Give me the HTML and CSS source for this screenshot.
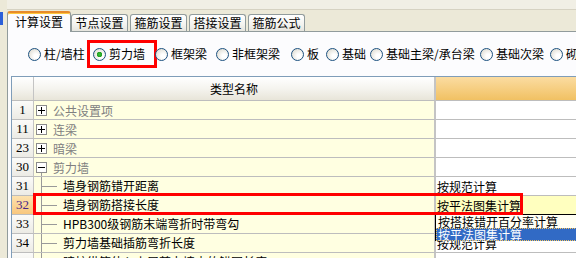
FILE: index.html
```html
<!DOCTYPE html>
<html lang="zh-CN">
<head>
  <meta charset="UTF-8">
  <link rel="stylesheet" href="styles.css">
</head>
<body>
  <div class="app">
    <div class="side"><div class="side-mark"></div></div>
    <div class="main">
      <div class="topbar"></div>
      <div class="tabs">
        <div class="tab active">计算设置</div>
        <div class="tab">节点设置</div>
        <div class="tab">箍筋设置</div>
        <div class="tab">搭接设置</div>
        <div class="tab">箍筋公式</div>
      </div>
      <div class="panel">
        <div class="radios">
          <label class="radio"><span class="dot"></span>柱/墙柱</label>
          <label class="radio checked"><span class="dot"></span>剪力墙<span class="mark"></span></label>
          <label class="radio"><span class="dot"></span>框架梁</label>
          <label class="radio"><span class="dot"></span>非框架梁</label>
          <label class="radio"><span class="dot"></span>板</label>
          <label class="radio"><span class="dot"></span>基础</label>
          <label class="radio"><span class="dot"></span>基础主梁/承台梁</label>
          <label class="radio"><span class="dot"></span>基础次梁</label>
          <label class="radio"><span class="dot"></span>砌体加筋</label>
        </div>

        <div class="grid">
          <div class="row head">
            <div class="num"></div>
            <div class="name">类型名称</div>
            <div class="val"></div>
          </div>
          <div class="row">
            <div class="num">1</div>
            <div class="name group"><span class="box plus"></span>公共设置项</div>
            <div class="val"></div>
          </div>
          <div class="row">
            <div class="num">11</div>
            <div class="name group"><span class="box plus"></span>连梁</div>
            <div class="val"></div>
          </div>
          <div class="row">
            <div class="num">23</div>
            <div class="name group"><span class="box plus"></span>暗梁</div>
            <div class="val"></div>
          </div>
          <div class="row">
            <div class="num">30</div>
            <div class="name group open"><span class="box minus"></span>剪力墙</div>
            <div class="val"></div>
          </div>
          <div class="row">
            <div class="num">31</div>
            <div class="name leaf"><span class="branch"></span>墙身钢筋错开距离</div>
            <div class="val">按规范计算</div>
          </div>
          <div class="row current">
            <div class="num">32</div>
            <div class="name leaf"><span class="branch"></span>墙身钢筋搭接长度</div>
            <div class="val editing">按平法图集计算
              <div class="dropdown">
                <div class="opt">按搭接错开百分率计算</div>
                <div class="opt sel">按平法图集计算</div>
              </div>
            </div>
            <span class="row-mark"></span>
          </div>
          <div class="row">
            <div class="num">33</div>
            <div class="name leaf"><span class="branch"></span>HPB300级钢筋末端弯折时带弯勾</div>
            <div class="val"></div>
          </div>
          <div class="row">
            <div class="num">34</div>
            <div class="name leaf"><span class="branch"></span>剪力墙基础插筋弯折长度</div>
            <div class="val">按规范计算</div>
          </div>
          <div class="row">
            <div class="num">35</div>
            <div class="name leaf"><span class="branch"></span>暗柱纵筋伸入上层剪力墙内的锚固长度</div>
            <div class="val"></div>
          </div>
        </div>
      </div>
    </div>
  </div>
</body>
</html>
```

FILE: styles.css
```css
* { box-sizing: border-box; }
body {
  margin: 0;
  width: 576px;
  height: 258px;
  overflow: hidden;
  background: #ece9d8;
  color: #000;
  font-family: "Noto Sans CJK SC", "Liberation Sans", sans-serif;
  font-size: 12px;
}
.app { display: flex; height: 258px; }

/* left strip */
.side { width: 7px; flex: none; padding-top: 12px; }
.side-mark { width: 3px; height: 13px; background: #2b5fd9; }

.main { flex: 1; min-width: 0; display: flex; flex-direction: column; }
.topbar { height: 10px; flex: none; background: #f1efe5; border-bottom: 1px solid #d6d2c2; }

/* tabs */
.tabs { height: 21px; flex: none; display: flex; align-items: flex-end; }
.tab {
  width: 57px;
  height: 17px;
  margin-left: 2px;
  border: 1px solid #919b9c;
  border-bottom: none;
  border-radius: 3px 3px 0 0;
  background: linear-gradient(#ffffff, #f3f3ef 60%, #e6e5de);
  text-align: center;
  line-height: 16px;
}
.tab.active {
  width: 64px;
  height: 21px;
  margin-left: 0;
  margin-right: -2px;
  margin-bottom: -1px;
  position: relative;
  z-index: 1;
  background: #fcfcfe;
  border-top: 2px solid #e68b2c;
  box-shadow: inset 0 1px 0 #ffc83c;
  line-height: 18px;
}
.tab.active + .tab { margin-left: 2px; }

.panel {
  flex: 1;
  min-height: 0;
  overflow: hidden;
  background: #fcfcfe;
  border-left: 1px solid #919b9c;
  border-top: 1px solid #919b9c;
  padding-left: 3px;
}

/* radio row */
.radios {
  height: 44px;
  padding-left: 17px;
  display: grid;
  grid-template-columns: 65px 62px 61px 75px 35px 44px 110px 70px auto;
  align-items: center;
  white-space: nowrap;
}
.radio { display: flex; align-items: center; gap: 3px; height: 16px; line-height: 16px; position: relative; }
.dot {
  width: 13px;
  height: 13px;
  flex: none;
  border-radius: 50%;
  border: 1px solid #1c5180;
  background: radial-gradient(circle at 65% 65%, #ffffff 20%, #e6e4dc 70%, #cfccc2);
}
.checked .dot {
  background: radial-gradient(circle, #3cbf3c 0, #21a121 2.5px, transparent 3px),
              radial-gradient(circle at 65% 65%, #ffffff 20%, #e6e4dc 70%, #cfccc2);
}
.mark {
  position: absolute;
  left: -6px;
  top: -6px;
  width: 70px;
  height: 28px;
  border: 3px solid #ff0000;
}

/* property grid */
.grid {
  width: 600px;
  border-left: 1px solid #7f9db9;
  border-top: 1px solid #7f9db9;
}
.row { display: flex; height: 19px; flex: none; position: relative; }
.row > div { border-bottom: 1px solid #bdbdbd; display: flex; align-items: center; white-space: nowrap; }
.num {
  width: 22px;
  flex: none;
  justify-content: center;
  border-right: 1px solid #c4c4c4;
  background: linear-gradient(#fbfbf9, #ecebe5);
  font-family: "Liberation Serif", serif;
  font-size: 13px;
}
.name {
  width: 402px;
  flex: none;
  border-right: 2px solid #c4c4c4;
  background: #ffffe1;
  padding-left: 2px;
}
.val { flex: 1; background: #fff; padding-left: 1px; }

.head { height: 24px; }
.head .num, .head .name { background: linear-gradient(#ffffff, #f5f4ef 50%, #e8e5d9); }
.head .name { justify-content: center; padding-left: 0; }
.head .val { background: linear-gradient(#fbdca1, #f1c163); }

/* tree */
.group { color: #808080; }
.box {
  width: 11px;
  height: 11px;
  margin-right: 6px;
  border: 1px solid #8c8c8c;
  background-color: #fff;
}
.plus {
  background-image: linear-gradient(#000, #000), linear-gradient(#000, #000);
  background-size: 7px 1px, 1px 7px;
  background-position: center;
  background-repeat: no-repeat;
}
.minus {
  background-image: linear-gradient(#000, #000);
  background-size: 7px 1px;
  background-position: center;
  background-repeat: no-repeat;
}
.open {
  background: linear-gradient(#999, #999) no-repeat 7px 100% / 1px 4px, #ffffe1;
}
.leaf { padding-left: 7px; align-items: stretch !important; line-height: 18px; }
.branch {
  width: 16px;
  margin-right: 6px;
  border-left: 1px solid #999;
  background: linear-gradient(#999, #999) no-repeat left center / 100% 1px;
}

/* current row */
.current .num { background: linear-gradient(#fde2ae, #f8c77e); color: #4a2888; }
.current .val.editing { background: #ffffbf; position: relative; }
.row-mark {
  position: absolute;
  left: 21px;
  top: -3px;
  width: 490px;
  height: 22px;
  border: 3px solid #ff0000;
  z-index: 3;
}
.dropdown {
  position: absolute;
  left: -1px;
  top: 18px;
  width: 200px;
  z-index: 2;
  border: 1px solid #000;
  border-right: none;
  border-bottom: none;
  background: #fffff4;
}
.opt { height: 13px; line-height: 13px; padding-left: 2px; }
.opt.sel {
  background: #316ac5;
  color: #fff;
  outline: 1px dotted #f5c35a;
  outline-offset: -1px;
}
```
